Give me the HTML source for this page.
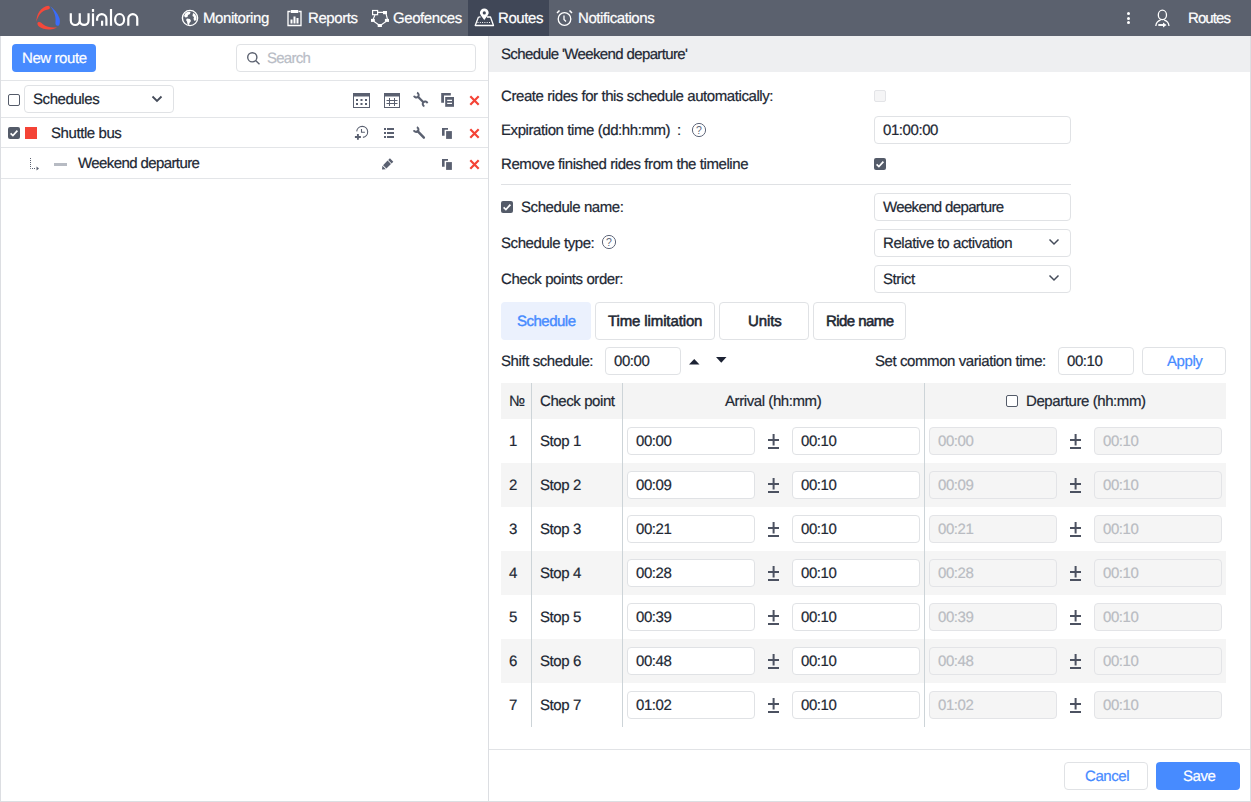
<!DOCTYPE html>
<html><head><meta charset="utf-8">
<style>
*{box-sizing:border-box;margin:0;padding:0}
html,body{width:1251px;height:802px;overflow:hidden;background:#fff}
body{position:relative;font-family:"Liberation Sans",sans-serif;font-size:15px;line-height:16px;color:#212733}
.a{position:absolute}
.t{position:absolute;white-space:nowrap;line-height:16px;font-size:15px;letter-spacing:-0.42px;text-rendering:geometricPrecision;-webkit-text-stroke:0.2px currentColor}
</style></head><body>
<div class="a" style="left:0px;top:0px;width:1251px;height:36px;background:#5b616e;"></div>
<div class="a" style="left:468px;top:0px;width:81px;height:36px;background:#404757;"></div>
<svg class="a" style="left:33px;top:3px" width="30" height="30" viewBox="0 0 802 802">
<path d="M410 75 C330 80 230 140 170 230 C110 320 90 420 90 510 C110 420 150 330 220 260 C290 200 360 175 420 165 C460 155 470 100 410 75 Z" fill="#f5483a"/>
<path d="M150 510 C110 520 105 580 160 630 C240 700 380 720 500 705 C560 695 610 670 640 645 C570 655 470 660 380 630 C300 600 260 560 220 525 C200 510 170 505 150 510 Z" fill="#f5483a"/>
<path d="M460 85 C560 150 660 270 705 400 C730 480 725 580 680 605 C640 625 595 590 600 530 C610 440 600 330 560 250 C530 180 490 120 460 85 Z" fill="#3a6cfa"/>
</svg>
<svg class="a" style="left:68px;top:8px" width="72" height="20" viewBox="0 0 72 20" fill="none" stroke="#fff" stroke-width="2.2">
    <path d="M2.8 5.2 V12.5 A4.475 4.475 0 0 0 11.75 12.5 V5.2 M11.75 12.5 A4.4 4.4 0 0 0 20.55 12.5 V5.2"/>
    <path d="M25 5.35 V18.1"/><rect x="23.9" y="1" width="2.2" height="2.9" fill="#fff" stroke="none"/>
    <path d="M29.1 12.7 V10.75 A4.65 4.65 0 0 1 38.4 10.75 V17.8"/><rect x="33" y="12.7" width="2.2" height="5.1" fill="#fff" stroke="none"/>
    <path d="M43 1 V17.8"/>
    <ellipse cx="51.6" cy="11.5" rx="4.5" ry="5.5"/>
    <path d="M60.3 17.8 V10.6 A4.475 4.475 0 0 1 69.25 10.6 V17.8"/>
</svg>

<svg class="a" style="left:181px;top:9px" width="18" height="18" viewBox="0 0 18 18" ><circle cx="9" cy="9" r="7.6" fill="none" stroke="#fff" stroke-width="1.4"/>
<path d="M4.5 4 C6 3 8 2.5 9.5 3 L9 5 L7 6 L6.5 8 L4.5 8.5 L3 7 Z" fill="#fff"/>
<path d="M6 9.5 L9 10 L10 12 L8.5 14 L8 16.5 L6.5 15 L6 12.5 L5 11 Z" fill="#fff"/>
<path d="M12 4 L14 5 L15.5 8 L15.3 11 L13.5 12 L12.5 10 L13 8 L11.5 7 Z" fill="#fff"/></svg>
<div class="t" style="left:203px;top:11px;color:#fff">Monitoring</div>
<svg class="a" style="left:286px;top:9px" width="17" height="18" viewBox="0 0 17 18" ><path d="M4.5 2.5 H2 V16.5 H15 V2.5 H12.5" fill="none" stroke="#fff" stroke-width="1.3"/><rect x="4.8" y="1" width="7.4" height="3" fill="#fff"/>
<rect x="4.5" y="10.5" width="2" height="4" fill="#fff"/><rect x="7.5" y="7.5" width="2" height="7" fill="#fff"/><rect x="10.5" y="9" width="2" height="5.5" fill="#fff"/></svg>
<div class="t" style="left:308px;top:11px;color:#fff">Reports</div>
<svg class="a" style="left:370px;top:9px" width="20" height="19" viewBox="0 0 20 19" ><path d="M7.5 3.4 H13.5 M5 6 L3 10.5 M16 4.5 L17.5 10.5 M4 12.5 L9 16 M11 16 L16 12.5" fill="none" stroke="#fff" stroke-width="1.1"/>
<rect x="2.6" y="1.5" width="5" height="4.2" fill="#5b616e" stroke="#fff" stroke-width="1.2"/>
<rect x="13" y="2" width="4" height="3.2" fill="#fff"/><rect x="14.9" y="9.9" width="4.1" height="3" fill="#fff"/>
<rect x="7.7" y="15" width="4.2" height="3" fill="#fff"/><rect x="1" y="9.9" width="3.8" height="3" fill="#fff"/></svg>
<div class="t" style="left:393px;top:11px;color:#fff">Geofences</div>
<svg class="a" style="left:474px;top:8px" width="21" height="19" viewBox="0 0 21 19" ><path d="M4.5 9 L1.2 17.5 H19.5 L16.5 9 H13" fill="none" stroke="#fff" stroke-width="1.3" stroke-linejoin="round"/><path d="M4.5 9 H6.5" stroke="#fff" stroke-width="1.3"/>
<path d="M10.3 12.3 C9.2 10 5.9 7.2 5.9 4.8 A4.4 4.4 0 0 1 14.7 4.8 C14.7 7.2 11.4 10 10.3 12.3 Z" fill="#fff"/>
<circle cx="10.3" cy="4.9" r="1.6" fill="#404757"/>
<path d="M3.5 14.5 H17" stroke="#fff" stroke-dasharray="1 1.3" stroke-width="1"/></svg>
<div class="t" style="left:498px;top:11px;color:#fff">Routes</div>
<svg class="a" style="left:556px;top:9px" width="17" height="18" viewBox="0 0 17 18" ><g fill="none" stroke="#fff" stroke-width="1.3"><circle cx="8.5" cy="10" r="6.3"/>
<path d="M8 6.5 V10.5 L10 12.5"/><path d="M1 4 L3.5 1.5 M13.5 1.5 L16 4" stroke-width="1.5"/></g></svg>
<div class="t" style="left:578px;top:11px;color:#fff">Notifications</div>
<div class="a" style="left:1127px;top:12px;width:3px;height:3px;border-radius:50%;background:#fff"></div>
<div class="a" style="left:1127px;top:16.5px;width:3px;height:3px;border-radius:50%;background:#fff"></div>
<div class="a" style="left:1127px;top:21px;width:3px;height:3px;border-radius:50%;background:#fff"></div>
<svg class="a" style="left:1154px;top:9px" width="18" height="20" viewBox="0 0 18 20" ><g fill="none" stroke="#fff" stroke-width="1.3"><ellipse cx="8.4" cy="5.9" rx="4.1" ry="4.7"/>
<path d="M1.8 17 C2.2 13.5 4.2 11.8 6.6 11.2 M10.2 11.2 C12.6 11.8 14.6 13.5 15 17"/>
<path d="M4.3 16 H10" stroke-width="1.9"/></g><path d="M9 13.6 L12.6 16 L9 18.4 Z" fill="#fff"/></svg>
<div class="t" style="left:1188px;top:11px;color:#fff;letter-spacing:-0.9px">Routes</div>
<div class="a" style="left:0px;top:36px;width:1px;height:766px;background:#dcdee2;"></div>
<div class="a" style="left:488px;top:36px;width:1px;height:766px;background:#dcdee2;"></div>
<div class="a" style="left:0px;top:801px;width:1251px;height:1px;background:#dcdee2;"></div>
<div class="a" style="left:12px;top:44px;width:84px;height:28px;background:#478bff;border-radius:4px"></div>
<div class="t" style="left:22px;top:51px;color:#fff">New route</div>
<div class="a" style="left:236px;top:44px;width:240px;height:28px;background:#fff;border:1px solid #e0e2e5;border-radius:4px"></div>
<svg class="a" style="left:246px;top:51px" width="16" height="15" viewBox="0 0 16 15" ><circle cx="6.3" cy="6.3" r="4.6" fill="none" stroke="#5c6270" stroke-width="1.4"/><path d="M9.6 9.6 L13.5 13.3" stroke="#5c6270" stroke-width="1.4"/></svg>
<div class="t" style="left:267px;top:51px;color:#b9bdc6;letter-spacing:-0.75px">Search</div>
<div class="a" style="left:1px;top:80px;width:487px;height:1px;background:#e3e5e8;"></div>
<div class="a" style="left:8px;top:94px;width:12px;height:12px;border:1.4px solid #545b69;border-radius:2px;background:#fff"></div>
<div class="a" style="left:24px;top:85px;width:150px;height:28px;background:#fff;border:1px solid #e0e2e5;border-radius:4px"></div>
<div class="t" style="left:33px;top:91.5px">Schedules</div>
<svg class="a" style="left:151px;top:95px" width="12" height="8" viewBox="0 0 12 8" ><path d="M1.5 1.5 L6 6 L10.5 1.5" fill="none" stroke="#454c5a" stroke-width="1.8"/></svg>
<div class="a" style="left:1px;top:117px;width:487px;height:1px;background:#e3e5e8;"></div>
<div class="a" style="left:8px;top:127px;width:12px;height:12px;background:#545b69;border-radius:2px"></div>
<svg class="a" style="left:8px;top:127px" width="12" height="12" viewBox="0 0 12 12" ><path d="M2.6 6.3 L4.9 8.5 L9.4 3.6" fill="none" stroke="#fff" stroke-width="1.7"/></svg>
<div class="a" style="left:25px;top:127px;width:12px;height:12px;background:#f44336;"></div>
<div class="t" style="left:51px;top:125.5px">Shuttle bus</div>
<div class="a" style="left:1px;top:147px;width:487px;height:1px;background:#e3e5e8;"></div>
<svg class="a" style="left:28px;top:157px" width="14" height="14" viewBox="0 0 14 14" ><path d="M2.5 1 V11.5 H8" fill="none" stroke="#5a6070" stroke-width="1" stroke-dasharray="1 1"/><path d="M8.5 9.5 L11 11.5 L8.5 13.5 Z" fill="#5a6070"/></svg>
<div class="a" style="left:54px;top:163px;width:13px;height:3px;background:#b7bbc3;"></div>
<div class="t" style="left:78px;top:156px;letter-spacing:-0.6px">Weekend departure</div>
<div class="a" style="left:1px;top:178px;width:487px;height:1px;background:#e3e5e8;"></div>
<svg class="a" style="left:353px;top:93px" width="17" height="15" viewBox="0 0 17 15" ><rect x="0.5" y="0.5" width="16" height="14" fill="none" stroke="#5a6070"/><rect x="0" y="0" width="17" height="3.5" fill="#5a6070"/><g fill="#5a6070"><rect x="3" y="6" width="2" height="2"/><rect x="7.5" y="6" width="2" height="2"/><rect x="12" y="6" width="2" height="2"/><rect x="3" y="10" width="2" height="2"/><rect x="7.5" y="10" width="2" height="2"/><rect x="12" y="10" width="2" height="2"/></g></svg>
<svg class="a" style="left:384px;top:93px" width="16" height="15" viewBox="0 0 16 15" ><rect x="0.5" y="0.5" width="15" height="14" fill="none" stroke="#5a6070"/><rect x="0" y="0" width="16" height="3.5" fill="#5a6070"/><path d="M2.5 7.5 H13.5 M2.5 10.5 H13.5 M5.5 5 V13 M10.5 5 V13" stroke="#5a6070" stroke-width="1"/></svg>
<svg class="a" style="left:410px;top:89px" width="20" height="20" viewBox="0 0 20 20" ><g fill="none" stroke="#5a6070" stroke-width="2.0"><path d="M7.00 3.80 A2.4 2.4 0 1 1 4.00 6.80"/><path d="M14.40 17.20 A2.4 2.4 0 1 1 17.40 14.20"/><path d="M8 7.8 L13.4 13.2" stroke-width="2.3"/></g></svg>
<svg class="a" style="left:441px;top:93px" width="14" height="15" viewBox="0 0 14 15" ><g fill="#5a6070"><path d="M0.2 0 H9.8 V2.6 H3 V9.8 H0.2 Z"/><rect x="4.2" y="4" width="8.8" height="9.8"/></g><path d="M6.2 7.4 H11 M6.2 10.4 H11" stroke="#fff" stroke-width="1.2"/></svg>
<svg class="a" style="left:469px;top:95px" width="11" height="11" viewBox="0 0 11 11" ><path d="M1.3 1.3 L9.7 9.7 M9.7 1.3 L1.3 9.7" stroke="#f44336" stroke-width="2.2"/></svg>
<svg class="a" style="left:354px;top:125px" width="15" height="16" viewBox="0 0 15 16" ><g fill="none" stroke="#5a6070" stroke-width="1.1"><path d="M2.7 6.4 A5.5 5.5 0 1 1 8.9 12.35"/><path d="M7.5 4.1 V7.3 H10.9"/><path d="M0.9 12 H6.9 M3.9 9.1 V14.8" stroke-width="1.9"/></g></svg>
<svg class="a" style="left:383px;top:127px" width="12" height="12" viewBox="0 0 12 12" ><g fill="#5a6070"><rect x="1" y="1" width="2" height="2"/><rect x="4" y="1" width="7" height="2"/><rect x="1" y="5" width="2" height="2"/><rect x="4" y="5" width="7" height="2"/><rect x="1" y="9" width="2" height="2"/><rect x="4" y="9" width="7" height="2"/></g></svg>
<svg class="a" style="left:410px;top:124px" width="16" height="16" viewBox="0 0 16 16" ><g fill="none" stroke="#5a6070" stroke-width="2.0"><path d="M6.80 3.20 A2.4 2.4 0 1 1 3.80 6.20"/><path d="M7.6 7.1 L13.9 13.7" stroke-width="2.4" stroke-linecap="round"/></g></svg>
<svg class="a" style="left:442px;top:128px" width="11" height="12" viewBox="0 0 11 12" ><g fill="#5a6070"><path d="M0 0 H6 V1.8 H2.6 V7.8 H0 Z"/><rect x="4.1" y="3.1" width="5.8" height="7.8"/></g></svg>
<svg class="a" style="left:469px;top:128px" width="11" height="11" viewBox="0 0 11 11" ><path d="M1.3 1.3 L9.7 9.7 M9.7 1.3 L1.3 9.7" stroke="#f44336" stroke-width="2.2"/></svg>
<svg class="a" style="left:380px;top:156px" width="15" height="15" viewBox="0 0 15 15" ><path d="M2.00 13.60 L5.82 13.18 L2.42 9.78Z M6.45 12.54 L3.06 9.15 L7.59 4.62 L10.98 8.01Z M11.62 7.38 L8.22 3.98 L9.92 2.29 L13.31 5.68Z" fill="#5a6070"/></svg>
<svg class="a" style="left:442px;top:159px" width="11" height="12" viewBox="0 0 11 12" ><g fill="#5a6070"><path d="M0 0 H6 V1.8 H2.6 V7.8 H0 Z"/><rect x="4.1" y="3.1" width="5.8" height="7.8"/></g></svg>
<svg class="a" style="left:469px;top:159px" width="11" height="11" viewBox="0 0 11 11" ><path d="M1.3 1.3 L9.7 9.7 M9.7 1.3 L1.3 9.7" stroke="#f44336" stroke-width="2.2"/></svg>
<div class="a" style="left:1250px;top:36px;width:1px;height:766px;background:#dcdee2;"></div>
<div class="a" style="left:489px;top:36px;width:761px;height:36px;background:#eeeff1;"></div>
<div class="t" style="left:501px;top:47px;letter-spacing:-0.63px">Schedule 'Weekend departure'</div>
<div class="t" style="left:501px;top:89px">Create rides for this schedule automatically:</div>
<div class="a" style="left:874px;top:90px;width:12px;height:12px;border:1px solid #e3e4e7;border-radius:2px;background:#f5f5f6"></div>
<div class="t" style="left:501px;top:123px">Expiration time (dd:hh:mm)</div>
<div class="t" style="left:677px;top:123px">:</div>
<svg class="a" style="left:691px;top:122px" width="16" height="16" viewBox="0 0 16 16" ><circle cx="8" cy="8" r="6.6" fill="none" stroke="#60677a" stroke-width="1"/><text x="8" y="11.8" text-anchor="middle" font-family="Liberation Sans" font-size="10.5" fill="#60677a">?</text></svg>
<div class="a" style="left:874px;top:116px;width:197px;height:28px;background:#fff;border:1px solid #e0e2e5;border-radius:4px"></div>
<div class="t" style="left:883px;top:123px">01:00:00</div>
<div class="t" style="left:501px;top:157px">Remove finished rides from the timeline</div>
<div class="a" style="left:874px;top:158px;width:12px;height:12px;background:#545b69;border-radius:2px"></div>
<svg class="a" style="left:874px;top:158px" width="12" height="12" viewBox="0 0 12 12" ><path d="M2.6 6.3 L4.9 8.5 L9.4 3.6" fill="none" stroke="#fff" stroke-width="1.7"/></svg>
<div class="a" style="left:501px;top:184px;width:570px;height:1px;background:#dfe1e4;"></div>
<div class="a" style="left:501px;top:201px;width:12px;height:12px;background:#545b69;border-radius:2px"></div>
<svg class="a" style="left:501px;top:201px" width="12" height="12" viewBox="0 0 12 12" ><path d="M2.6 6.3 L4.9 8.5 L9.4 3.6" fill="none" stroke="#fff" stroke-width="1.7"/></svg>
<div class="t" style="left:521px;top:200px">Schedule name:</div>
<div class="a" style="left:874px;top:193px;width:197px;height:28px;background:#fff;border:1px solid #e0e2e5;border-radius:4px"></div>
<div class="t" style="left:883px;top:200px;letter-spacing:-0.65px">Weekend departure</div>
<div class="t" style="left:501px;top:235.5px">Schedule type:</div>
<svg class="a" style="left:601px;top:234px" width="16" height="16" viewBox="0 0 16 16" ><circle cx="8" cy="8" r="6.6" fill="none" stroke="#60677a" stroke-width="1"/><text x="8" y="11.8" text-anchor="middle" font-family="Liberation Sans" font-size="10.5" fill="#60677a">?</text></svg>
<div class="a" style="left:874px;top:229px;width:197px;height:28px;background:#fff;border:1px solid #e0e2e5;border-radius:4px"></div>
<div class="t" style="left:883px;top:235.5px">Relative to activation</div>
<svg class="a" style="left:1048px;top:238px" width="12" height="8" viewBox="0 0 12 8" ><path d="M1.5 1.5 L6 6 L10.5 1.5" fill="none" stroke="#454c5a" stroke-width="1.5"/></svg>
<div class="t" style="left:501px;top:271.5px">Check points order:</div>
<div class="a" style="left:874px;top:265px;width:197px;height:28px;background:#fff;border:1px solid #e0e2e5;border-radius:4px"></div>
<div class="t" style="left:883px;top:271.5px">Strict</div>
<svg class="a" style="left:1048px;top:274px" width="12" height="8" viewBox="0 0 12 8" ><path d="M1.5 1.5 L6 6 L10.5 1.5" fill="none" stroke="#454c5a" stroke-width="1.5"/></svg>
<div class="a" style="left:501px;top:302px;width:90px;height:38px;background:#ebf1fd;border-radius:4px"></div>
<div class="t" style="left:517px;top:314px;color:#478bff;letter-spacing:-0.5px;-webkit-text-stroke:0.4px currentColor">Schedule</div>
<div class="a" style="left:595px;top:302px;width:120px;height:38px;background:#fff;border:1px solid #e0e2e5;border-radius:4px"></div>
<div class="t" style="left:608px;top:314px;letter-spacing:-0.12px;-webkit-text-stroke:0.55px currentColor">Time limitation</div>
<div class="a" style="left:719px;top:302px;width:90px;height:38px;background:#fff;border:1px solid #e0e2e5;border-radius:4px"></div>
<div class="t" style="left:748px;top:314px;letter-spacing:-0.12px;-webkit-text-stroke:0.55px currentColor">Units</div>
<div class="a" style="left:813px;top:302px;width:93px;height:38px;background:#fff;border:1px solid #e0e2e5;border-radius:4px"></div>
<div class="t" style="left:826px;top:314px;letter-spacing:-0.55px;-webkit-text-stroke:0.55px currentColor">Ride name</div>
<div class="t" style="left:501px;top:354px">Shift schedule:</div>
<div class="a" style="left:605px;top:347px;width:76px;height:28px;background:#fff;border:1px solid #e0e2e5;border-radius:4px"></div>
<div class="t" style="left:614px;top:354px">00:00</div>
<svg class="a" style="left:689px;top:358px" width="11" height="7" viewBox="0 0 11 7" ><path d="M0 6.5 L5.25 1 L10.5 6.5 Z" fill="#1c2233"/></svg>
<svg class="a" style="left:716px;top:357px" width="11" height="7" viewBox="0 0 11 7" ><path d="M0 0 L10.5 0 L5.25 5.8 Z" fill="#1c2233"/></svg>
<div class="t" style="left:875px;top:354px">Set common variation time:</div>
<div class="a" style="left:1058px;top:347px;width:76px;height:28px;background:#fff;border:1px solid #e0e2e5;border-radius:4px"></div>
<div class="t" style="left:1067px;top:354px">00:10</div>
<div class="a" style="left:1142px;top:347px;width:84px;height:28px;background:#fff;border:1px solid #e0e2e5;border-radius:4px"></div>
<div class="t" style="left:1167px;top:354px;color:#478bff">Apply</div>
<div class="a" style="left:501px;top:383px;width:725px;height:36px;background:#f4f4f4;"></div>
<div class="t" style="left:509px;top:394px">№</div>
<div class="t" style="left:540px;top:394px">Check point</div>
<div class="t" style="left:725px;top:394px">Arrival (hh:mm)</div>
<div class="a" style="left:1006px;top:395px;width:12px;height:12px;border:1.4px solid #545b69;border-radius:2px;background:#fff"></div>
<div class="t" style="left:1026px;top:394px">Departure (hh:mm)</div>
<div class="t" style="left:509px;top:434px">1</div>
<div class="t" style="left:540px;top:434px">Stop 1</div>
<div class="a" style="left:627px;top:427px;width:128px;height:28px;background:#fff;border:1px solid #e0e2e5;border-radius:4px"></div>
<div class="t" style="left:636px;top:434px">00:00</div>
<svg class="a" style="left:768px;top:434px" width="11" height="16" viewBox="0 0 11 16" ><g fill="#4c5261"><rect x="0" y="5" width="11" height="2"/><rect x="4.6" y="0" width="2" height="11.5"/><rect x="0" y="13" width="11" height="2"/></g></svg>
<div class="a" style="left:792px;top:427px;width:128px;height:28px;background:#fff;border:1px solid #e0e2e5;border-radius:4px"></div>
<div class="t" style="left:801px;top:434px">00:10</div>
<div class="a" style="left:929px;top:427px;width:128px;height:28px;background:#f5f5f5;border:1px solid #e3e4e7;border-radius:4px"></div>
<div class="t" style="left:938px;top:434px;color:#b9bcc2">00:00</div>
<svg class="a" style="left:1070px;top:434px" width="11" height="16" viewBox="0 0 11 16" ><g fill="#4c5261"><rect x="0" y="5" width="11" height="2"/><rect x="4.6" y="0" width="2" height="11.5"/><rect x="0" y="13" width="11" height="2"/></g></svg>
<div class="a" style="left:1094px;top:427px;width:128px;height:28px;background:#f5f5f5;border:1px solid #e3e4e7;border-radius:4px"></div>
<div class="t" style="left:1103px;top:434px;color:#b9bcc2">00:10</div>
<div class="a" style="left:501px;top:463px;width:725px;height:44px;background:#f5f5f5;"></div>
<div class="t" style="left:509px;top:478px">2</div>
<div class="t" style="left:540px;top:478px">Stop 2</div>
<div class="a" style="left:627px;top:471px;width:128px;height:28px;background:#fff;border:1px solid #e0e2e5;border-radius:4px"></div>
<div class="t" style="left:636px;top:478px">00:09</div>
<svg class="a" style="left:768px;top:478px" width="11" height="16" viewBox="0 0 11 16" ><g fill="#4c5261"><rect x="0" y="5" width="11" height="2"/><rect x="4.6" y="0" width="2" height="11.5"/><rect x="0" y="13" width="11" height="2"/></g></svg>
<div class="a" style="left:792px;top:471px;width:128px;height:28px;background:#fff;border:1px solid #e0e2e5;border-radius:4px"></div>
<div class="t" style="left:801px;top:478px">00:10</div>
<div class="a" style="left:929px;top:471px;width:128px;height:28px;background:#f5f5f5;border:1px solid #e3e4e7;border-radius:4px"></div>
<div class="t" style="left:938px;top:478px;color:#b9bcc2">00:09</div>
<svg class="a" style="left:1070px;top:478px" width="11" height="16" viewBox="0 0 11 16" ><g fill="#4c5261"><rect x="0" y="5" width="11" height="2"/><rect x="4.6" y="0" width="2" height="11.5"/><rect x="0" y="13" width="11" height="2"/></g></svg>
<div class="a" style="left:1094px;top:471px;width:128px;height:28px;background:#f5f5f5;border:1px solid #e3e4e7;border-radius:4px"></div>
<div class="t" style="left:1103px;top:478px;color:#b9bcc2">00:10</div>
<div class="t" style="left:509px;top:522px">3</div>
<div class="t" style="left:540px;top:522px">Stop 3</div>
<div class="a" style="left:627px;top:515px;width:128px;height:28px;background:#fff;border:1px solid #e0e2e5;border-radius:4px"></div>
<div class="t" style="left:636px;top:522px">00:21</div>
<svg class="a" style="left:768px;top:522px" width="11" height="16" viewBox="0 0 11 16" ><g fill="#4c5261"><rect x="0" y="5" width="11" height="2"/><rect x="4.6" y="0" width="2" height="11.5"/><rect x="0" y="13" width="11" height="2"/></g></svg>
<div class="a" style="left:792px;top:515px;width:128px;height:28px;background:#fff;border:1px solid #e0e2e5;border-radius:4px"></div>
<div class="t" style="left:801px;top:522px">00:10</div>
<div class="a" style="left:929px;top:515px;width:128px;height:28px;background:#f5f5f5;border:1px solid #e3e4e7;border-radius:4px"></div>
<div class="t" style="left:938px;top:522px;color:#b9bcc2">00:21</div>
<svg class="a" style="left:1070px;top:522px" width="11" height="16" viewBox="0 0 11 16" ><g fill="#4c5261"><rect x="0" y="5" width="11" height="2"/><rect x="4.6" y="0" width="2" height="11.5"/><rect x="0" y="13" width="11" height="2"/></g></svg>
<div class="a" style="left:1094px;top:515px;width:128px;height:28px;background:#f5f5f5;border:1px solid #e3e4e7;border-radius:4px"></div>
<div class="t" style="left:1103px;top:522px;color:#b9bcc2">00:10</div>
<div class="a" style="left:501px;top:551px;width:725px;height:44px;background:#f5f5f5;"></div>
<div class="t" style="left:509px;top:566px">4</div>
<div class="t" style="left:540px;top:566px">Stop 4</div>
<div class="a" style="left:627px;top:559px;width:128px;height:28px;background:#fff;border:1px solid #e0e2e5;border-radius:4px"></div>
<div class="t" style="left:636px;top:566px">00:28</div>
<svg class="a" style="left:768px;top:566px" width="11" height="16" viewBox="0 0 11 16" ><g fill="#4c5261"><rect x="0" y="5" width="11" height="2"/><rect x="4.6" y="0" width="2" height="11.5"/><rect x="0" y="13" width="11" height="2"/></g></svg>
<div class="a" style="left:792px;top:559px;width:128px;height:28px;background:#fff;border:1px solid #e0e2e5;border-radius:4px"></div>
<div class="t" style="left:801px;top:566px">00:10</div>
<div class="a" style="left:929px;top:559px;width:128px;height:28px;background:#f5f5f5;border:1px solid #e3e4e7;border-radius:4px"></div>
<div class="t" style="left:938px;top:566px;color:#b9bcc2">00:28</div>
<svg class="a" style="left:1070px;top:566px" width="11" height="16" viewBox="0 0 11 16" ><g fill="#4c5261"><rect x="0" y="5" width="11" height="2"/><rect x="4.6" y="0" width="2" height="11.5"/><rect x="0" y="13" width="11" height="2"/></g></svg>
<div class="a" style="left:1094px;top:559px;width:128px;height:28px;background:#f5f5f5;border:1px solid #e3e4e7;border-radius:4px"></div>
<div class="t" style="left:1103px;top:566px;color:#b9bcc2">00:10</div>
<div class="t" style="left:509px;top:610px">5</div>
<div class="t" style="left:540px;top:610px">Stop 5</div>
<div class="a" style="left:627px;top:603px;width:128px;height:28px;background:#fff;border:1px solid #e0e2e5;border-radius:4px"></div>
<div class="t" style="left:636px;top:610px">00:39</div>
<svg class="a" style="left:768px;top:610px" width="11" height="16" viewBox="0 0 11 16" ><g fill="#4c5261"><rect x="0" y="5" width="11" height="2"/><rect x="4.6" y="0" width="2" height="11.5"/><rect x="0" y="13" width="11" height="2"/></g></svg>
<div class="a" style="left:792px;top:603px;width:128px;height:28px;background:#fff;border:1px solid #e0e2e5;border-radius:4px"></div>
<div class="t" style="left:801px;top:610px">00:10</div>
<div class="a" style="left:929px;top:603px;width:128px;height:28px;background:#f5f5f5;border:1px solid #e3e4e7;border-radius:4px"></div>
<div class="t" style="left:938px;top:610px;color:#b9bcc2">00:39</div>
<svg class="a" style="left:1070px;top:610px" width="11" height="16" viewBox="0 0 11 16" ><g fill="#4c5261"><rect x="0" y="5" width="11" height="2"/><rect x="4.6" y="0" width="2" height="11.5"/><rect x="0" y="13" width="11" height="2"/></g></svg>
<div class="a" style="left:1094px;top:603px;width:128px;height:28px;background:#f5f5f5;border:1px solid #e3e4e7;border-radius:4px"></div>
<div class="t" style="left:1103px;top:610px;color:#b9bcc2">00:10</div>
<div class="a" style="left:501px;top:639px;width:725px;height:44px;background:#f5f5f5;"></div>
<div class="t" style="left:509px;top:654px">6</div>
<div class="t" style="left:540px;top:654px">Stop 6</div>
<div class="a" style="left:627px;top:647px;width:128px;height:28px;background:#fff;border:1px solid #e0e2e5;border-radius:4px"></div>
<div class="t" style="left:636px;top:654px">00:48</div>
<svg class="a" style="left:768px;top:654px" width="11" height="16" viewBox="0 0 11 16" ><g fill="#4c5261"><rect x="0" y="5" width="11" height="2"/><rect x="4.6" y="0" width="2" height="11.5"/><rect x="0" y="13" width="11" height="2"/></g></svg>
<div class="a" style="left:792px;top:647px;width:128px;height:28px;background:#fff;border:1px solid #e0e2e5;border-radius:4px"></div>
<div class="t" style="left:801px;top:654px">00:10</div>
<div class="a" style="left:929px;top:647px;width:128px;height:28px;background:#f5f5f5;border:1px solid #e3e4e7;border-radius:4px"></div>
<div class="t" style="left:938px;top:654px;color:#b9bcc2">00:48</div>
<svg class="a" style="left:1070px;top:654px" width="11" height="16" viewBox="0 0 11 16" ><g fill="#4c5261"><rect x="0" y="5" width="11" height="2"/><rect x="4.6" y="0" width="2" height="11.5"/><rect x="0" y="13" width="11" height="2"/></g></svg>
<div class="a" style="left:1094px;top:647px;width:128px;height:28px;background:#f5f5f5;border:1px solid #e3e4e7;border-radius:4px"></div>
<div class="t" style="left:1103px;top:654px;color:#b9bcc2">00:10</div>
<div class="t" style="left:509px;top:698px">7</div>
<div class="t" style="left:540px;top:698px">Stop 7</div>
<div class="a" style="left:627px;top:691px;width:128px;height:28px;background:#fff;border:1px solid #e0e2e5;border-radius:4px"></div>
<div class="t" style="left:636px;top:698px">01:02</div>
<svg class="a" style="left:768px;top:698px" width="11" height="16" viewBox="0 0 11 16" ><g fill="#4c5261"><rect x="0" y="5" width="11" height="2"/><rect x="4.6" y="0" width="2" height="11.5"/><rect x="0" y="13" width="11" height="2"/></g></svg>
<div class="a" style="left:792px;top:691px;width:128px;height:28px;background:#fff;border:1px solid #e0e2e5;border-radius:4px"></div>
<div class="t" style="left:801px;top:698px">00:10</div>
<div class="a" style="left:929px;top:691px;width:128px;height:28px;background:#f5f5f5;border:1px solid #e3e4e7;border-radius:4px"></div>
<div class="t" style="left:938px;top:698px;color:#b9bcc2">01:02</div>
<svg class="a" style="left:1070px;top:698px" width="11" height="16" viewBox="0 0 11 16" ><g fill="#4c5261"><rect x="0" y="5" width="11" height="2"/><rect x="4.6" y="0" width="2" height="11.5"/><rect x="0" y="13" width="11" height="2"/></g></svg>
<div class="a" style="left:1094px;top:691px;width:128px;height:28px;background:#f5f5f5;border:1px solid #e3e4e7;border-radius:4px"></div>
<div class="t" style="left:1103px;top:698px;color:#b9bcc2">00:10</div>
<div class="a" style="left:531px;top:383px;width:1px;height:344px;background:#cdd4d8;"></div>
<div class="a" style="left:622px;top:383px;width:1px;height:344px;background:#cdd4d8;"></div>
<div class="a" style="left:924px;top:383px;width:1px;height:344px;background:#cdd4d8;"></div>
<div class="a" style="left:489px;top:749px;width:761px;height:1px;background:#e1e3e6;"></div>
<div class="a" style="left:489px;top:750px;width:761px;height:51px;background:#fff;"></div>
<div class="a" style="left:1064px;top:762px;width:84px;height:28px;background:#fff;border:1px solid #e0e2e5;border-radius:4px"></div>
<div class="t" style="left:1085px;top:769px;color:#478bff">Cancel</div>
<div class="a" style="left:1156px;top:762px;width:84px;height:28px;background:#478bff;border-radius:4px"></div>
<div class="t" style="left:1183px;top:769px;color:#fff">Save</div>
</body></html>
